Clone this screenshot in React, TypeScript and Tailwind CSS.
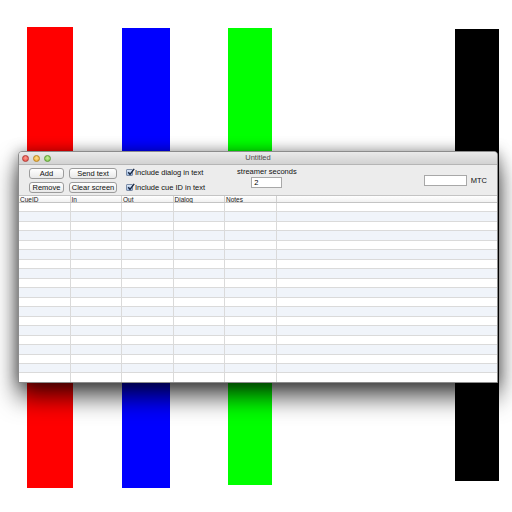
const COLUMNS = ['CueID', 'In', 'Out', 'Dialog', 'Notes'];
const ROW_COUNT = 19;

function Button({ label, w }: { label: string; w: string }) {
  return (
    <div className={`flex h-[11px] ${w} items-center justify-center rounded-[3px] border border-[#9c9c9c] bg-gradient-to-b from-white to-[#e9e9e9] text-[7.5px] leading-none text-[#111]`}>
      {label}
    </div>
  );
}

function Check({ label }: { label: string }) {
  return (
    <div className="flex items-center gap-[2px] text-[7.5px] leading-none text-[#111]">
      <div className="relative h-[7px] w-[7px] rounded-[1px] border border-[#7c8da8] bg-gradient-to-b from-[#dbe7f7] to-[#9fbde6]">
        <svg viewBox="0 0 8 8" className="absolute -top-[2px] left-0 h-[8px] w-[8px]">
          <path d="M1.2 4.2 L3 6.3 L7.2 0.8" fill="none" stroke="#1b2a44" strokeWidth="1.4" />
        </svg>
      </div>
      <span>{label}</span>
    </div>
  );
}

function Window() {
  return (
    <div className="absolute left-[18px] top-[151px] flex h-[232px] w-[480px] flex-col overflow-hidden rounded-t-[4px] border border-[#8c8c8c] bg-[#ececec] shadow-[0_14px_24px_rgba(0,0,0,0.7),0_0_14px_rgba(0,0,0,0.35)]">
      {/* title bar */}
      <div className="relative flex h-[12px] shrink-0 items-center bg-gradient-to-b from-[#eaeaea] to-[#d2d2d2]">
        <div className="flex items-center gap-[4px] pl-[3px]">
          <div className="h-[7px] w-[7px] rounded-full border border-[#b03a35] bg-[radial-gradient(circle_at_50%_40%,#ff9a90,#e5483e)]" />
          <div className="h-[7px] w-[7px] rounded-full border border-[#b88520] bg-[radial-gradient(circle_at_50%_40%,#ffe08a,#e9a630)]" />
          <div className="h-[7px] w-[7px] rounded-full border border-[#5c9a34] bg-[radial-gradient(circle_at_50%_40%,#c8f09a,#78c048)]" />
        </div>
        <div className="absolute inset-0 flex items-center justify-center text-[7.5px] text-[#4d4d4d]">Untitled</div>
      </div>

      {/* toolbar */}
      <div className="flex h-[31px] shrink-0 items-start border-t border-[#b5b5b5] pt-[3px]">
        <div className="ml-[10px] grid grid-cols-[35px_48px] gap-x-[5px] gap-y-[3px]">
          <Button label="Add" w="w-[35px]" />
          <Button label="Send text" w="w-[48px]" />
          <Button label="Remove" w="w-[35px]" />
          <Button label="Clear screen" w="w-[48px]" />
        </div>
        <div className="ml-[9px] mt-[1px] flex flex-col gap-[7px]">
          <Check label="Include dialog in text" />
          <Check label="Include cue ID in text" />
        </div>
        <div className="ml-[32px] flex flex-col items-center">
          <span className="text-[7.5px] leading-none text-[#111]">streamer seconds</span>
          <div className="mt-[1px] h-[11px] w-[31px] border border-[#a8a8a8] bg-white pl-[2px] text-[7.5px] leading-[10px]">2</div>
        </div>
        <div className="ml-auto mr-[10px] mt-[7px] flex items-center gap-[4px]">
          <div className="h-[11px] w-[43px] border border-[#a8a8a8] bg-white" />
          <span className="text-[7.5px] leading-none text-[#111]">MTC</span>
        </div>
      </div>

      {/* table */}
      <div className="flex flex-1 flex-col bg-white">
        <div className="flex h-[8px] shrink-0 border-b border-t border-[#c4c4c4] bg-gradient-to-b from-white to-[#f1f1f1]">
          {COLUMNS.map((c) => (
            <div key={c} className="w-[51.5px] shrink-0 border-r border-[#d0d0d0] pl-[1px] text-[6.5px] leading-[7px] text-[#222]">
              {c}
            </div>
          ))}
        </div>
        {Array.from({ length: ROW_COUNT }).map((_, i) => (
          <div
            key={i}
            className={`flex h-[9.47px] shrink-0 border-b border-[#dadada] ${i % 2 === 1 ? 'bg-[#f0f4fa]' : 'bg-white'}`}
          >
            {COLUMNS.map((c) => (
              <div key={c} className="w-[51.5px] shrink-0 border-r border-[#dadada]" />
            ))}
          </div>
        ))}
      </div>
    </div>
  );
}

export default function App() {
  return (
    <div className="relative h-[512px] w-[512px] overflow-hidden bg-white font-['Liberation_Sans',Arial,sans-serif]">
      <div className="flex items-start">
        <div className="ml-[27px] mt-[27px] h-[461px] w-[46px] bg-[#ff0000]" />
        <div className="ml-[49px] mt-[28px] h-[460px] w-[48px] bg-[#0000ff]" />
        <div className="ml-[58px] mt-[28px] h-[457px] w-[44px] bg-[#00ff00]" />
        <div className="ml-[183px] mt-[29px] h-[452px] w-[44px] bg-black" />
      </div>
      <Window />
    </div>
  );
}
